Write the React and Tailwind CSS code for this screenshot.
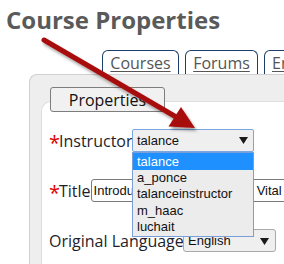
import React from "react";

function Caret({ className }) {
  return (
    <svg width="9" height="7" viewBox="0 0 9 7" className={className}>
      <polygon points="0,0 9,0 4.5,7" fill="#1a1a1a" />
    </svg>
  );
}

export default function App() {
  const users = ["talance", "a_ponce", "talanceinstructor", "m_haac", "luchait"];
  return (
    <div
      className="relative w-[284px] h-[264px] overflow-hidden bg-white flex flex-col"
      style={{ fontFamily: '"Open Sans", sans-serif' }}
    >
      <h1 className="pl-[6px] pt-[4px] text-[24px] leading-[32px] font-bold text-[#5a5a5a] whitespace-nowrap">
        Course Properties
      </h1>

      <div className="mt-[14px] pl-[102px] flex gap-[6px] items-end whitespace-nowrap">
        <div className="shrink-0 w-[77px] h-[24px] border-[1.5px] border-b-0 border-[#1d3d6b] rounded-t-[6px] bg-white flex justify-center pt-[2px] text-[16px] leading-[20px] text-[#555] underline underline-offset-[2px] decoration-1">
          Courses
        </div>
        <div className="shrink-0 w-[73px] h-[24px] border-[1.5px] border-b-0 border-[#1d3d6b] rounded-t-[6px] bg-white flex justify-center pt-[2px] text-[16px] leading-[20px] text-[#555] underline underline-offset-[2px] decoration-1">
          Forums
        </div>
        <div className="shrink-0 w-[100px] h-[24px] border-[1.5px] border-b-0 border-[#1d3d6b] rounded-t-[6px] bg-white flex pl-[7px] pt-[2px] text-[16px] leading-[20px] text-[#555] underline underline-offset-[2px] decoration-1">
          Enrollments
        </div>
      </div>

      <div className="ml-[29px] flex-1 flex flex-col bg-[#eeeeee] border-l border-t border-[#d0d0d0] rounded-tl-[8px]">
        <div className="relative z-10 mt-[12px] ml-[20px] w-[115px] h-[25px] border border-[#7d7d7d] rounded-[3px] bg-[#f1f1f1] flex items-center justify-center text-[16px] leading-[20px] text-[#111]">
          Properties
        </div>
        <div className="-mt-[11px] ml-[11px] flex-1 bg-white border-l border-t border-[#dedede] rounded-tl-[10px] pt-[27px] pl-[7px] flex flex-col">
          <div className="flex items-center h-[23px] whitespace-nowrap">
            <span className="w-[10px] text-[20px] leading-[20px] text-[#e00000] pt-[4px]">*</span>
            <span className="w-[73px] text-[16px] leading-[20px] text-[#1e1e2a]">Instructor</span>
            <div className="relative w-[122px] h-[23px]">
              <div
                className="w-full h-full border border-[#7ba5e0] rounded-[2px] bg-[#efefef] flex items-center pl-[4px] text-[13px] text-[#111]"
                style={{ fontFamily: '"Liberation Sans", Arial, sans-serif' }}
              >
                talance
              </div>
              <Caret className="absolute right-[6px] top-[8px]" />
              <div
                className="absolute z-20 top-[23px] left-0 w-[122px] border border-[#7a9ed8] bg-[#ececec] text-[13px] text-[#111]"
                style={{ fontFamily: '"Liberation Sans", Arial, sans-serif' }}
              >
                {users.map((u, i) => (
                  <div
                    key={u}
                    className={
                      i === 0
                        ? "h-[17px] leading-[17px] pl-[4px] bg-[#1e90ff] text-white"
                        : "h-[16.4px] leading-[16.4px] pl-[4px]"
                    }
                  >
                    {u}
                  </div>
                ))}
              </div>
            </div>
          </div>

          <div className="mt-[27px] flex items-center h-[23px] whitespace-nowrap">
            <span className="w-[10px] text-[20px] leading-[20px] text-[#e00000] pt-[4px]">*</span>
            <span className="w-[32px] text-[16px] leading-[20px] text-[#1e1e2a]">Title</span>
            <div
              className="w-[220px] shrink-0 h-[23px] border border-[#7a7a7a] rounded-[3px] bg-white flex items-center pl-[2px] text-[13px] text-[#111]"
              style={{ fontFamily: '"Liberation Sans", Arial, sans-serif' }}
            >
              Introduction to the World of&nbsp;&nbsp;Vital
            </div>
          </div>

          <div className="mt-[27px] flex items-center h-[23px] whitespace-nowrap">
            <span className="w-[134px] text-[16px] leading-[20px] text-[#1e1e2a]">Original Language</span>
            <div
              className="relative w-[93px] h-[23px] border border-[#a9a9a9] rounded-[3px] bg-[#efefef] flex items-center pl-[4px] text-[13px] text-[#111]"
              style={{ fontFamily: '"Liberation Sans", Arial, sans-serif' }}
            >
              English
              <Caret className="absolute right-[6px] top-[8px]" />
            </div>
          </div>
        </div>
      </div>

      <svg
        className="absolute left-0 top-0 z-30 pointer-events-none"
        width="284"
        height="264"
        viewBox="0 0 284 264"
      >
        <defs>
          <filter id="sh" x="-20%" y="-20%" width="140%" height="140%">
            <feDropShadow dx="2" dy="3" stdDeviation="1.6" floodColor="#000" floodOpacity="0.35" />
          </filter>
        </defs>
        <g filter="url(#sh)">
          <line x1="44" y1="40" x2="177" y2="117.5" stroke="#a80c0c" strokeWidth="5" strokeLinecap="round" />
          <polygon points="195,128 181,107 168.5,126.5" fill="#a80c0c" />
        </g>
      </svg>
    </div>
  );
}
